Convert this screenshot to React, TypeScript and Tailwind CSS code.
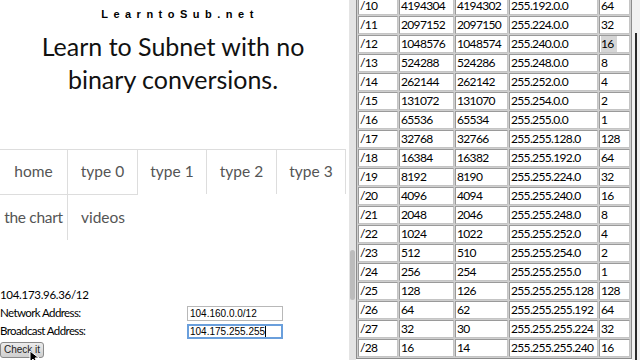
import React from "react";

const rows: string[][] = [
  ["/10", "4194304", "4194302", "255.192.0.0", "64"],
  ["/11", "2097152", "2097150", "255.224.0.0", "32"],
  ["/12", "1048576", "1048574", "255.240.0.0", "16"],
  ["/13", "524288", "524286", "255.248.0.0", "8"],
  ["/14", "262144", "262142", "255.252.0.0", "4"],
  ["/15", "131072", "131070", "255.254.0.0", "2"],
  ["/16", "65536", "65534", "255.255.0.0", "1"],
  ["/17", "32768", "32766", "255.255.128.0", "128"],
  ["/18", "16384", "16382", "255.255.192.0", "64"],
  ["/19", "8192", "8190", "255.255.224.0", "32"],
  ["/20", "4096", "4094", "255.255.240.0", "16"],
  ["/21", "2048", "2046", "255.255.248.0", "8"],
  ["/22", "1024", "1022", "255.255.252.0", "4"],
  ["/23", "512", "510", "255.255.254.0", "2"],
  ["/24", "256", "254", "255.255.255.0", "1"],
  ["/25", "128", "126", "255.255.255.128", "128"],
  ["/26", "64", "62", "255.255.255.192", "64"],
  ["/27", "32", "30", "255.255.255.224", "32"],
  ["/28", "16", "14", "255.255.255.240", "16"],
];

export default function App() {
  return (
    <div className="relative w-[640px] h-[360px] overflow-hidden flex bg-white font-['Lato',sans-serif] text-black">
      {/* Left panel */}
      <div className="w-[346px] shrink-0 flex flex-col">
        <div className="pt-[7px] pl-[14px] text-center font-['Liberation_Sans',sans-serif] font-bold text-[11px] leading-[14px] tracking-[5.5px]">
          LearntoSub.net
        </div>
        <div className="mt-[9px] text-center text-[25px] leading-[33px] text-[#111]">
          Learn to Subnet with no
          <br />
          binary conversions.
        </div>
        <div className="mt-[53px] text-[15.5px] text-[#555]">
          <div className="flex border-t border-[#dddddd] h-[46px]">
            <div className="w-[68px] border-r border-b border-[#dddddd] flex items-center justify-center">home</div>
            <div className="w-[70px] border-r border-b border-[#dddddd] flex items-center justify-center">type 0</div>
            <div className="w-[69px] h-[44px] border-r border-[#dddddd] flex items-center justify-center">type 1</div>
            <div className="w-[70px] h-[44px] border-r border-[#dddddd] flex items-center justify-center">type 2</div>
            <div className="w-[69px] h-[44px] border-r border-[#dddddd] flex items-center justify-center">type 3</div>
          </div>
          <div className="flex h-[45px]">
            <div className="w-[68px] border-r border-[#dddddd] flex items-center justify-center whitespace-nowrap tracking-[-0.3px]">the chart</div>
            <div className="w-[70px] flex items-center justify-center">videos</div>
          </div>
        </div>
        <div className="mt-[46px] text-[11.5px] leading-[18px]">
          <div className="tracking-[-0.3px]">104.173.96.36/12</div>
          <div className="flex items-center h-[18px]">
            <div className="w-[187px] tracking-[-0.6px]">Network Address:</div>
            <div className="w-[96px] h-[15px] border border-[#b8b8b8] bg-white text-[10px] leading-[13px] pl-[2px] font-['Liberation_Sans',sans-serif]">
              104.160.0.0/12
            </div>
          </div>
          <div className="flex items-center h-[18px]">
            <div className="w-[187px] tracking-[-0.6px]">Broadcast Address:</div>
            <div className="w-[96px] h-[15px] border-2 border-[#6a9fdc] bg-white text-[10px] leading-[11px] pl-[1px] font-['Liberation_Sans',sans-serif] flex items-center">
              <span>104.175.255.255</span>
              <span className="w-[1px] h-[11px] bg-black" />
            </div>
          </div>
          <button className="mt-[2px] h-[16px] w-[44px] border border-[#8a8a8a] rounded-[3px] bg-gradient-to-b from-[#ececec] to-[#cfcfcf] text-[10px] leading-[14px] text-[#222] font-['Liberation_Sans',sans-serif]">
            Check it
          </button>
        </div>
      </div>

      {/* Left scrollbar */}
      <div className="w-[10px] shrink-0 flex">
        <div className="ml-[3px] w-[7px] bg-[#e4e4e4] flex flex-col">
          <div className="h-[250px]" />
          <div className="mx-[1px] h-[50px] rounded-[3px] bg-[#bcbcbc]" />
        </div>
      </div>

      {/* Table */}
      <div className="flex-1 flex overflow-hidden">
        <div className="-mt-[5px] self-start border border-[#8c8c8c] bg-[#cfcfcf] p-[1px] grid grid-cols-[40px_55px_53px_89px_31px] auto-rows-[18px] gap-[1px] text-[12px] tracking-[-0.65px]">
          {rows.map((r) =>
            r.map((c, i) => (
              <div
                key={r[0] + i}
                className="border border-t-[#9a9a9a] border-l-[#9a9a9a] border-r-[#c4c4c4] border-b-[#c4c4c4] bg-white pl-[1px] leading-[16px] whitespace-nowrap overflow-hidden"
              >
                {r[0] === "/12" && i === 4 ? (
                  <span className="inline-block bg-[#d6d6d6] pr-[3px]">{c}</span>
                ) : (
                  c
                )}
              </div>
            ))
          )}
        </div>
        <div className="flex-1 bg-[#f1f1f1] flex pl-[3px]">
          <div className="mt-[33px] w-[2px] h-[330px] bg-[#2a2a2a]" />
        </div>
      </div>

      {/* Cursor */}
      <svg className="absolute left-[29px] top-[350px]" width="10" height="14" viewBox="0 0 10 14">
        <path d="M1 1 L1 12 L4 9 L6 13 L8 12 L6 8 L10 8 Z" fill="#000" stroke="#fff" strokeWidth="1" />
      </svg>
    </div>
  );
}
